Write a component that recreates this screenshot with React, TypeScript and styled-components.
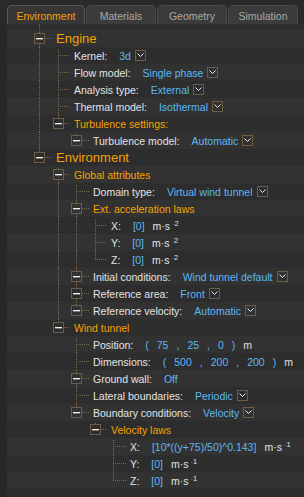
import React from "react";
import styled, { createGlobalStyle } from "styled-components";

const ORANGE = "#f5a200";
const BLUE = "#5cb8f2";
const TEXT = "#e3e3e3";
const LINE = "#7a6853";
const BOX = "#6f5c45";
const ROW_A = "#323232";
const ROW_B = "#2d2d2d";
const ROW_H = 17;
const MID = 8;
const LINE_X = 9;

// column boundaries of the tree, measured from the row's left edge
const col = (level: number) => Math.round(23 + 18.6 * level);

const vSeg = (x: number, y0: number, y1: number) =>
  `repeating-linear-gradient(to bottom, ${LINE} 0 1px, transparent 1px 2px) ${x}px ${y0}px / 1px ${y1 - y0}px no-repeat`;
const hSeg = (y: number, x0: number, x1: number) =>
  `repeating-linear-gradient(to right, ${LINE} 0 1px, transparent 1px 2px) ${x0}px ${y}px / ${x1 - x0}px 1px no-repeat`;

const GlobalStyle = createGlobalStyle`
  html, body {
    margin: 0;
    padding: 0;
    background: #2a2a2a;
  }
  body {
    font-family: "Liberation Sans", Arial, sans-serif;
  }
`;

const Frame = styled.div`
  width: 304px;
  height: 497px;
  overflow: hidden;
  background: #2a2a2a;
  display: flex;
  flex-direction: column;
`;

const TabBar = styled.div`
  flex: none;
  display: flex;
  gap: 1px;
  height: 24px;
  padding: 5px 0 0 7px;
  box-sizing: border-box;
  background: #2a2a2a;
`;

const Tab = styled.div<{ $active?: boolean }>`
  width: ${(p) => (p.$active ? 78 : 70)}px;
  display: flex;
  align-items: center;
  justify-content: center;
  box-sizing: border-box;
  border: 1px solid ${(p) => (p.$active ? "#575757" : "#4a4a4a")};
  border-bottom: none;
  border-radius: 5px 5px 0 0;
  background: ${(p) => (p.$active ? "#363636" : "#3b3b3b")};
  color: ${(p) => (p.$active ? ORANGE : "#a9a9a9")};
  font-size: 10.5px;
  padding-top: 1px;
`;

const Body = styled.div`
  flex: 1;
  display: flex;
  min-height: 0;
`;

const Gutter = styled.div`
  width: 7px;
  flex: none;
  background: #282828;
`;

const Tree = styled.div`
  flex: 1;
  display: flex;
  flex-direction: column;
`;

const Lead = styled.div`
  flex: none;
  height: 6px;
  display: flex;
  padding-left: 23px;
  background: ${ROW_B};
`;

const Row = styled.div<{ $odd: boolean }>`
  flex: none;
  display: flex;
  align-items: center;
  height: ${ROW_H}px;
  padding-left: 23px;
  background: ${(p) => (p.$odd ? ROW_B : ROW_A)};
  white-space: nowrap;
  font-size: 10.5px;
  color: ${TEXT};
`;

const Guide = styled.div<{ $w: number; $pipe: boolean }>`
  flex: none;
  align-self: stretch;
  width: ${(p) => p.$w}px;
  background: ${(p) => (p.$pipe ? vSeg(LINE_X, 0, 17) : "none")};
`;

const Branch = styled.div<{ $w: number; $top: number; $last: boolean }>`
  flex: none;
  align-self: stretch;
  display: flex;
  align-items: center;
  width: ${(p) => p.$w}px;
  background: ${(p) =>
    [
      vSeg(LINE_X, p.$top, MID + 1),
      p.$last ? "" : vSeg(LINE_X, MID, ROW_H),
      hSeg(MID, LINE_X, p.$w - 4),
    ]
      .filter(Boolean)
      .join(", ")};
`;

const Toggle = styled.div<{ $odd: boolean }>`
  width: 11px;
  height: 11px;
  margin-left: 4px;
  box-sizing: border-box;
  border: 1px solid ${BOX};
  background: ${(p) => (p.$odd ? ROW_B : ROW_A)};
  display: flex;
  align-items: center;
  justify-content: center;

  &::after {
    content: "";
    width: 7px;
    height: 1px;
    background: #f2f2f2;
    box-shadow: 0 1px 0 rgba(242, 242, 242, 0.35);
  }
`;

const RootLabel = styled.span`
  color: ${ORANGE};
  font-size: 13px;
`;

const GroupLabel = styled.span`
  color: ${ORANGE};
`;

const Value = styled.span`
  color: ${BLUE};
  margin-left: 12px;
  display: inline-flex;
  align-items: center;
`;

const Unit = styled.span`
  color: ${TEXT};
  margin-left: 8px;
`;

const Sup = styled.sup`
  font-size: 7.5px;
  vertical-align: 4px;
  margin-left: 2px;
`;

const Minus = styled.span`
  color: #6a6a6a;
`;

const Tuple = styled.span`
  display: inline-flex;
  gap: 8px;
  margin-left: 12px;
  color: ${BLUE};
`;

const DropBox = styled.span`
  display: inline-flex;
  align-items: center;
  justify-content: center;
  width: 11px;
  height: 11px;
  box-sizing: border-box;
  border: 1px solid ${BOX};
  margin-left: 4px;
`;

const Drop = () => (
  <DropBox>
    <svg width="7" height="5" viewBox="0 0 7 5">
      <path d="M0.5 0.5 L3.5 3.5 L6.5 0.5" stroke="#ececec" strokeWidth="1" fill="none" />
    </svg>
  </DropBox>
);

const Choice = ({ text }: { text: string }) => (
  <Value>
    {text}
    <Drop />
  </Value>
);

const Law = ({ v, p }: { v: string; p: string }) => (
  <>
    <Value>[{v}]</Value>
    <Unit>
      m·s
      <Sup>
        <Minus>-</Minus>
        {p}
      </Sup>
    </Unit>
  </>
);

const Triple = ({ a, b, c }: { a: string; b: string; c: string }) => (
  <Tuple>
    <span>(</span>
    <span>{a}</span>
    <span>,</span>
    <span>{b}</span>
    <span>,</span>
    <span>{c}</span>
    <span>)</span>
    <span style={{ color: TEXT }}>m</span>
  </Tuple>
);

type Node = {
  kind: "root" | "group" | "item";
  label: string;
  box?: boolean;
  value?: React.ReactNode;
  children?: Node[];
};

const tree: Node[] = [
  {
    kind: "root",
    label: "Engine",
    box: true,
    children: [
      { kind: "item", label: "Kernel:", value: <Choice text="3d" /> },
      { kind: "item", label: "Flow model:", value: <Choice text="Single phase" /> },
      { kind: "item", label: "Analysis type:", value: <Choice text="External" /> },
      { kind: "item", label: "Thermal model:", value: <Choice text="Isothermal" /> },
      {
        kind: "group",
        label: "Turbulence settings:",
        box: true,
        children: [
          { kind: "item", label: "Turbulence model:", box: true, value: <Choice text="Automatic" /> },
        ],
      },
    ],
  },
  {
    kind: "root",
    label: "Environment",
    box: true,
    children: [
      {
        kind: "group",
        label: "Global attributes",
        box: true,
        children: [
          { kind: "item", label: "Domain type:", value: <Choice text="Virtual wind tunnel" /> },
          {
            kind: "group",
            label: "Ext. acceleration laws",
            box: true,
            children: [
              { kind: "item", label: "X:", value: <Law v="0" p="2" /> },
              { kind: "item", label: "Y:", value: <Law v="0" p="2" /> },
              { kind: "item", label: "Z:", value: <Law v="0" p="2" /> },
            ],
          },
          { kind: "item", label: "Initial conditions:", box: true, value: <Choice text="Wind tunnel default" /> },
          { kind: "item", label: "Reference area:", box: true, value: <Choice text="Front" /> },
          { kind: "item", label: "Reference velocity:", box: true, value: <Choice text="Automatic" /> },
        ],
      },
      {
        kind: "group",
        label: "Wind tunnel",
        box: true,
        children: [
          { kind: "item", label: "Position:", value: <Triple a="75" b="25" c="0" /> },
          { kind: "item", label: "Dimensions:", value: <Triple a="500" b="200" c="200" /> },
          { kind: "item", label: "Ground wall:", box: true, value: <Value>Off</Value> },
          { kind: "item", label: "Lateral boundaries:", value: <Choice text="Periodic" /> },
          {
            kind: "item",
            label: "Boundary conditions:",
            box: true,
            value: <Choice text="Velocity" />,
            children: [
              {
                kind: "group",
                label: "Velocity laws",
                box: true,
                children: [
                  { kind: "item", label: "X:", value: <Law v="10*((y+75)/50)^0.143" p="1" /> },
                  { kind: "item", label: "Y:", value: <Law v="0" p="1" /> },
                  { kind: "item", label: "Z:", value: <Law v="0" p="1" /> },
                ],
              },
            ],
          },
        ],
      },
    ],
  },
];

type Flat = { node: Node; level: number; pipes: boolean[]; first: boolean; last: boolean };

function flatten(nodes: Node[], level = 0, pipes: boolean[] = [], out: Flat[] = []) {
  nodes.forEach((node, i) => {
    const last = i === nodes.length - 1;
    out.push({ node, level, pipes, first: i === 0, last });
    if (node.children) flatten(node.children, level + 1, [...pipes, !last], out);
  });
  return out;
}

const rows = flatten(tree);
const tabs = ["Environment", "Materials", "Geometry", "Simulation"];

export default function App() {
  return (
    <Frame>
      <GlobalStyle />
      <TabBar>
        {tabs.map((t, i) => (
          <Tab key={t} $active={i === 0}>
            {t}
          </Tab>
        ))}
      </TabBar>
      <Body>
        <Gutter />
        <Tree>
          <Lead>
            <Guide $w={col(1) - col(0)} $pipe />
          </Lead>
          {rows.map((r, i) => {
            const odd = i % 2 === 1;
            const { node } = r;
            return (
              <Row key={i} $odd={odd}>
                {r.pipes.map((p, k) => (
                  <Guide key={k} $w={col(k + 1) - col(k)} $pipe={p} />
                ))}
                <Branch
                  $w={col(r.level + 1) - col(r.level) + 7}
                  $top={r.first && r.level > 0 ? 2 : 0}
                  $last={r.last}
                >
                  {node.box && <Toggle $odd={odd} />}
                </Branch>
                {node.kind === "root" && <RootLabel>{node.label}</RootLabel>}
                {node.kind === "group" && <GroupLabel>{node.label}</GroupLabel>}
                {node.kind === "item" && <span>{node.label}</span>}
                {node.value}
              </Row>
            );
          })}
          <Row $odd={rows.length % 2 === 1} />
        </Tree>
      </Body>
    </Frame>
  );
}
